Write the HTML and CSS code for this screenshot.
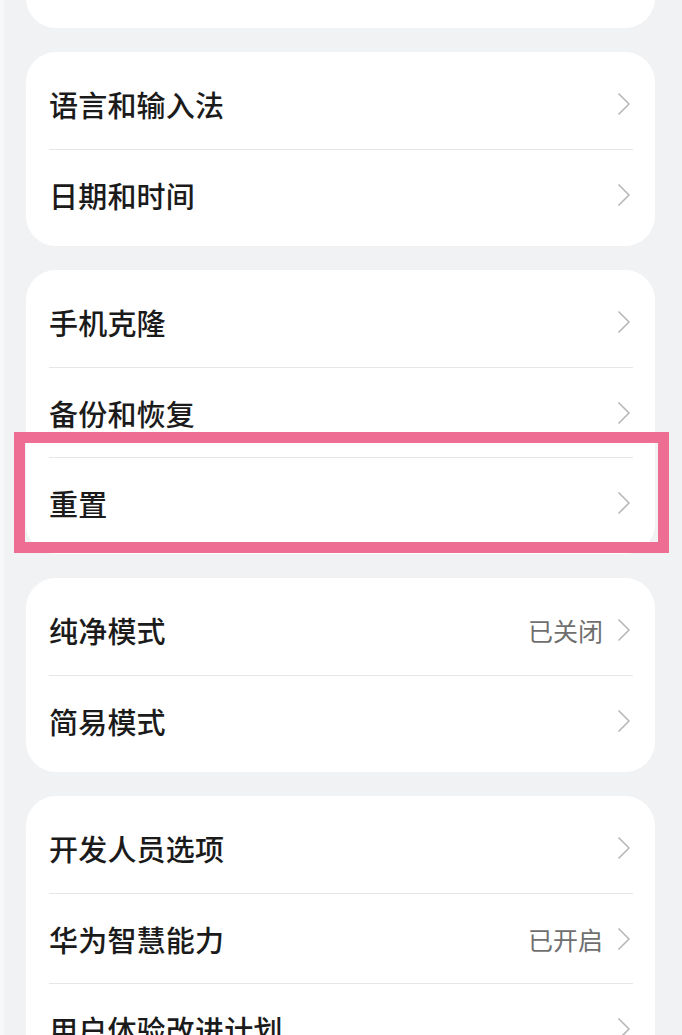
FILE: index.html
```html
<!DOCTYPE html>
<html lang="zh-CN">

<head>
  <meta charset="UTF-8">
  <meta name="viewport" content="width=device-width, initial-scale=1.0">
  <title>系统和更新</title>
  <link rel="stylesheet" href="styles.css">
</head>

<body>
  <div class="page">

    <div class="card card-cut">
      <div class="row"></div>
    </div>

    <div class="card">
      <div class="row">
        <span class="label">语言和输入法</span>
        <svg class="chevron" viewBox="0 0 12 22"><path d="M1 1 L11 11 L1 21" /></svg>
      </div>
      <div class="row">
        <span class="label">日期和时间</span>
        <svg class="chevron" viewBox="0 0 12 22"><path d="M1 1 L11 11 L1 21" /></svg>
      </div>
    </div>

    <div class="card">
      <div class="row">
        <span class="label">手机克隆</span>
        <svg class="chevron" viewBox="0 0 12 22"><path d="M1 1 L11 11 L1 21" /></svg>
      </div>
      <div class="row">
        <span class="label">备份和恢复</span>
        <svg class="chevron" viewBox="0 0 12 22"><path d="M1 1 L11 11 L1 21" /></svg>
      </div>
      <div class="row highlight">
        <span class="label">重置</span>
        <svg class="chevron" viewBox="0 0 12 22"><path d="M1 1 L11 11 L1 21" /></svg>
      </div>
    </div>

    <div class="card">
      <div class="row">
        <span class="label">纯净模式</span>
        <span class="value">已关闭</span>
        <svg class="chevron" viewBox="0 0 12 22"><path d="M1 1 L11 11 L1 21" /></svg>
      </div>
      <div class="row">
        <span class="label">简易模式</span>
        <svg class="chevron" viewBox="0 0 12 22"><path d="M1 1 L11 11 L1 21" /></svg>
      </div>
    </div>

    <div class="card">
      <div class="row">
        <span class="label">开发人员选项</span>
        <svg class="chevron" viewBox="0 0 12 22"><path d="M1 1 L11 11 L1 21" /></svg>
      </div>
      <div class="row">
        <span class="label">华为智慧能力</span>
        <span class="value">已开启</span>
        <svg class="chevron" viewBox="0 0 12 22"><path d="M1 1 L11 11 L1 21" /></svg>
      </div>
      <div class="row">
        <span class="label">用户体验改进计划</span>
        <svg class="chevron" viewBox="0 0 12 22"><path d="M1 1 L11 11 L1 21" /></svg>
      </div>
    </div>

  </div>
</body>

</html>
```

FILE: styles.css
```css
body {
  margin: 0;
  padding: 0;
  background-color: #f1f2f4;
  font-family: "Noto Sans CJK SC", "Noto Sans", sans-serif;
  overflow: hidden;
}

.page {
  display: flex;
  flex-direction: column;
  gap: 24px;
  padding: 0 27px 0 22px;
  border-left: 4px solid #f7f8fa;
  height: 1035px;
}

.card {
  background-color: #fff;
  border-radius: 30px;
  padding: 7px 22px 7px 23px;
  flex-shrink: 0;
}

/* only the bottom of this card is on screen */
.card-cut {
  margin-top: -76px;
}

.row {
  display: flex;
  align-items: center;
  height: 90px;
  border-top: 1px solid #e6e6e8;
  box-sizing: border-box;
}

.row:first-child {
  border-top: none;
}

.label {
  flex: 1;
  font-size: 29px;
  font-weight: 500;
  color: #1b1b1b;
  letter-spacing: 0.2px;
}

.value {
  font-size: 25px;
  color: #6f6f6f;
  margin-right: 15px;
}

.chevron {
  width: 12px;
  height: 22px;
  margin-right: 3px;
}

.chevron path {
  fill: none;
  stroke: #b9b9bb;
  stroke-width: 1.7;
  stroke-linecap: round;
  stroke-linejoin: round;
}

.highlight {
  position: relative;
}

/* pink marker drawn over the row */
.highlight::after {
  content: "";
  position: absolute;
  top: -26px;
  bottom: -6px;
  left: -35px;
  right: -36px;
  border: 11px solid #ee6d93;
}
```
